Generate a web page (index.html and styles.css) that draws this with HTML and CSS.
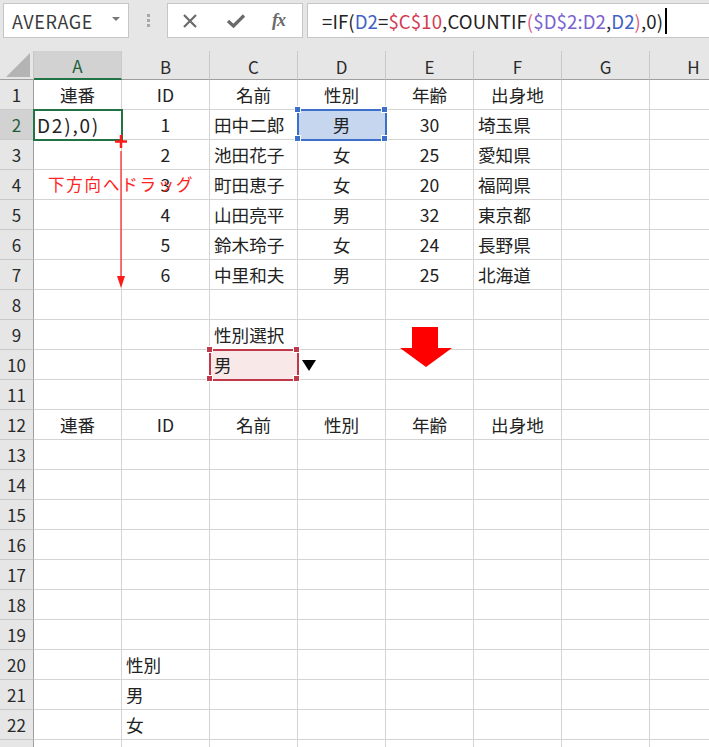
FILE: index.html
```html
<!DOCTYPE html>
<html lang="ja">
<head>
<meta charset="utf-8">
<title>Excel</title>
<link rel="stylesheet" href="styles.css">
</head>
<body>
<div class="toolbar">
  <div class="namebox"><span class="nb-text">AVERAGE</span><svg class="nb-caret" width="8" height="5" viewBox="0 0 8 5"><polygon points="0,0 8,0 4,4" fill="#777"/></svg></div>
  <div class="dots"><span></span><span></span><span></span></div>
  <div class="fxbox">
    <svg class="ic" width="16" height="16" viewBox="0 0 16 16"><path d="M2 2 L14 14 M14 2 L2 14" stroke="#6a6a6a" stroke-width="2.2" fill="none"/></svg>
    <svg class="ic" width="20" height="16" viewBox="0 0 20 16"><path d="M2 8 L7.5 13 L18 2.5" stroke="#6a6a6a" stroke-width="3.2" fill="none"/></svg>
    <span class="fx">fx</span>
  </div>
  <div class="formula"><span>=IF(</span><span class="r1">D2</span><span>=</span><span class="r2">$C$10</span><span>,COUNTIF</span><span class="pp">(</span><span class="r3">$D$2:D2</span><span>,</span><span class="r1">D2</span><span class="pp">)</span><span>,0)</span><span class="cursor"></span></div>
</div>

<div class="sheet">
  <div class="grid">
    <div class="corner"><svg width="24" height="24" viewBox="0 0 24 24"><polygon points="24,0 24,24 0,24" fill="#b4b4b4"/></svg></div>
    <div class="ch sel">A</div><div class="ch">B</div><div class="ch">C</div><div class="ch">D</div><div class="ch">E</div><div class="ch">F</div><div class="ch">G</div><div class="ch">H</div>

    <div class="rh">1</div><div class="c ctr">連番</div><div class="c ctr">ID</div><div class="c ctr">名前</div><div class="c ctr">性別</div><div class="c ctr">年齢</div><div class="c ctr">出身地</div><div class="c"></div><div class="c"></div>
    <div class="rh sel">2</div><div class="c edit"><span>D2),0)</span></div><div class="c ctr">1</div><div class="c">田中二郎</div><div class="c ctr blue-sel">男<i class="h tl"></i><i class="h tr"></i><i class="h bl"></i><i class="h br"></i></div><div class="c ctr">30</div><div class="c">埼玉県</div><div class="c"></div><div class="c"></div>
    <div class="rh">3</div><div class="c"></div><div class="c ctr">2</div><div class="c">池田花子</div><div class="c ctr">女</div><div class="c ctr">25</div><div class="c">愛知県</div><div class="c"></div><div class="c"></div>
    <div class="rh">4</div><div class="c"></div><div class="c ctr">3</div><div class="c">町田恵子</div><div class="c ctr">女</div><div class="c ctr">20</div><div class="c">福岡県</div><div class="c"></div><div class="c"></div>
    <div class="rh">5</div><div class="c"></div><div class="c ctr">4</div><div class="c">山田亮平</div><div class="c ctr">男</div><div class="c ctr">32</div><div class="c">東京都</div><div class="c"></div><div class="c"></div>
    <div class="rh">6</div><div class="c"></div><div class="c ctr">5</div><div class="c">鈴木玲子</div><div class="c ctr">女</div><div class="c ctr">24</div><div class="c">長野県</div><div class="c"></div><div class="c"></div>
    <div class="rh">7</div><div class="c"></div><div class="c ctr">6</div><div class="c">中里和夫</div><div class="c ctr">男</div><div class="c ctr">25</div><div class="c">北海道</div><div class="c"></div><div class="c"></div>
    <div class="rh">8</div><div class="c"></div><div class="c"></div><div class="c"></div><div class="c"></div><div class="c"></div><div class="c"></div><div class="c"></div><div class="c"></div>
    <div class="rh">9</div><div class="c"></div><div class="c"></div><div class="c">性別選択</div><div class="c"></div><div class="c"></div><div class="c"></div><div class="c"></div><div class="c"></div>
    <div class="rh">10</div><div class="c"></div><div class="c"></div><div class="c red-sel">男<i class="h tl"></i><i class="h tr"></i><i class="h bl"></i><i class="h br"></i></div><div class="c"></div><div class="c"></div><div class="c"></div><div class="c"></div><div class="c"></div>
    <div class="rh">11</div><div class="c"></div><div class="c"></div><div class="c"></div><div class="c"></div><div class="c"></div><div class="c"></div><div class="c"></div><div class="c"></div>
    <div class="rh">12</div><div class="c ctr">連番</div><div class="c ctr">ID</div><div class="c ctr">名前</div><div class="c ctr">性別</div><div class="c ctr">年齢</div><div class="c ctr">出身地</div><div class="c"></div><div class="c"></div>
    <div class="rh">13</div><div class="c"></div><div class="c"></div><div class="c"></div><div class="c"></div><div class="c"></div><div class="c"></div><div class="c"></div><div class="c"></div>
    <div class="rh">14</div><div class="c"></div><div class="c"></div><div class="c"></div><div class="c"></div><div class="c"></div><div class="c"></div><div class="c"></div><div class="c"></div>
    <div class="rh">15</div><div class="c"></div><div class="c"></div><div class="c"></div><div class="c"></div><div class="c"></div><div class="c"></div><div class="c"></div><div class="c"></div>
    <div class="rh">16</div><div class="c"></div><div class="c"></div><div class="c"></div><div class="c"></div><div class="c"></div><div class="c"></div><div class="c"></div><div class="c"></div>
    <div class="rh">17</div><div class="c"></div><div class="c"></div><div class="c"></div><div class="c"></div><div class="c"></div><div class="c"></div><div class="c"></div><div class="c"></div>
    <div class="rh">18</div><div class="c"></div><div class="c"></div><div class="c"></div><div class="c"></div><div class="c"></div><div class="c"></div><div class="c"></div><div class="c"></div>
    <div class="rh">19</div><div class="c"></div><div class="c"></div><div class="c"></div><div class="c"></div><div class="c"></div><div class="c"></div><div class="c"></div><div class="c"></div>
    <div class="rh">20</div><div class="c"></div><div class="c">性別</div><div class="c"></div><div class="c"></div><div class="c"></div><div class="c"></div><div class="c"></div><div class="c"></div>
    <div class="rh">21</div><div class="c"></div><div class="c">男</div><div class="c"></div><div class="c"></div><div class="c"></div><div class="c"></div><div class="c"></div><div class="c"></div>
    <div class="rh">22</div><div class="c"></div><div class="c">女</div><div class="c"></div><div class="c"></div><div class="c"></div><div class="c"></div><div class="c"></div><div class="c"></div>
    <div class="rh">23</div><div class="c"></div><div class="c"></div><div class="c"></div><div class="c"></div><div class="c"></div><div class="c"></div><div class="c"></div><div class="c"></div>
  </div>

  <div class="drag-label">下方向へドラッグ</div>
  <svg class="drag" width="16" height="157" viewBox="0 0 16 157">
    <path d="M8 0 V13 M2 6.5 H14" stroke="#ff1a1a" stroke-width="2.5" fill="none"/>
    <path d="M8 16 V145" stroke="#ff1a1a" stroke-width="1.2" fill="none"/>
    <polygon points="4,141 12,141 8,153" fill="#ff1a1a"/>
  </svg>
  <svg class="dd" width="14" height="11" viewBox="0 0 14 11"><polygon points="0,0 14,0 7,11" fill="#000"/></svg>
  <svg class="big-arrow" width="52" height="40" viewBox="0 0 52 40"><polygon points="12,0 38,0 38,21 52,21 26,40 0,21 12,21" fill="#ff0000"/></svg>
</div>
</body>
</html>
```

FILE: styles.css
```css
* { box-sizing: border-box; }
html, body { margin: 0; padding: 0; }
body {
  width: 709px;
  height: 747px;
  overflow: hidden;
  background: #ffffff;
  font-family: "Noto Sans CJK JP", "Noto Sans", sans-serif;
  color: #222;
}

.toolbar {
  height: 51px;
  background: #e6e6e6;
  display: flex;
  align-items: flex-start;
  padding-top: 3px;
  padding-left: 3px;
}
.namebox {
  width: 126px;
  height: 35px;
  background: #fff;
  border: 1px solid #c6c6c6;
  display: flex;
  align-items: center;
  justify-content: space-between;
  padding: 0 8px 0 8px;
}
.nb-text { font-size: 18px; color: #3a3a3a; letter-spacing: 0.6px; }
.nb-caret { margin-top: -2px; }
.dots {
  width: 38px;
  height: 35px;
  display: flex;
  flex-direction: column;
  align-items: center;
  justify-content: center;
  gap: 2px;
}
.dots span { width: 3px; height: 3px; background: #a8a8a8; }
.fxbox {
  width: 136px;
  height: 35px;
  background: #fff;
  border: 1px solid #c6c6c6;
  display: flex;
  align-items: center;
  padding-left: 14px;
}
.fxbox .ic { margin-right: 28px; }
.fxbox .ic + .ic { margin-right: 26px; }
.fx {
  font-family: "Liberation Serif", "DejaVu Serif", serif;
  font-style: italic;
  font-weight: bold;
  font-size: 18px;
  color: #6a6a6a;
  letter-spacing: -1px;
}
.formula {
  flex: 1;
  height: 35px;
  margin-left: 4px;
  background: #fff;
  border: 1px solid #c6c6c6;
  border-right: none;
  display: flex;
  align-items: center;
  padding-left: 14px;
  font-size: 18.6px;
  letter-spacing: 0.1px;
  color: #222;
  white-space: nowrap;
}
.formula .r1 { color: #3f62c6; }
.formula .r2 { color: #d23c52; }
.formula .r3 { color: #7a62cf; }
.formula .pp { color: #dd5f8a; }
.formula .cursor { width: 1.5px; height: 26px; background: #000; margin-left: 2px; }

.sheet { position: relative; }
.grid {
  display: grid;
  grid-template-columns: 34px repeat(8, 88px);
  grid-template-rows: 29px repeat(23, 30px);
}
.corner {
  background: #e6e6e6;
  border-right: 1px solid #c6c6c6;
  border-bottom: 1px solid #9f9f9f;
  display: flex;
  align-items: flex-end;
  justify-content: flex-end;
  padding: 0 3px 2px 0;
}
.ch {
  background: #e6e6e6;
  border-right: 1px solid #c9c9c9;
  border-bottom: 1px solid #9f9f9f;
  display: flex;
  align-items: center;
  justify-content: center;
  font-size: 17px;
  color: #2a2a2a;
  padding-top: 2px;
}
.ch.sel {
  background: #d2d2d2;
  color: #1d5e3a;
  border-bottom: 2px solid #217346;
}
.rh {
  background: #e6e6e6;
  border-right: 1px solid #9f9f9f;
  border-bottom: 1px solid #c9c9c9;
  display: flex;
  align-items: center;
  justify-content: center;
  font-size: 17px;
  color: #2a2a2a;
}
.rh.sel { background: #d2d2d2; color: #1d5e3a; }
.c {
  position: relative;
  border-right: 1px solid #d4d4d4;
  border-bottom: 1px solid #d4d4d4;
  display: flex;
  align-items: center;
  padding-left: 4px;
  font-size: 17.6px;
  color: #222;
  white-space: nowrap;
}
.c.ctr { justify-content: center; padding-left: 0; }
.c.edit {
  outline: 2px solid #217346;
  outline-offset: -1px;
  z-index: 2;
  padding-left: 3px;
}
.c.edit span { font-size: 19px; letter-spacing: 1.8px; }
.c.blue-sel {
  background: #c6d6ee;
  outline: 2px solid #3b6fc9;
  outline-offset: -1px;
  z-index: 2;
}
.c.red-sel {
  background: #f8e8e8;
  outline: 2px solid #c0394b;
  outline-offset: -1px;
  z-index: 2;
}
.h {
  position: absolute;
  width: 7px;
  height: 7px;
  background: #3b6fc9;
  border: 1px solid #fff;
}
.red-sel .h { background: #c0394b; }
.h.tl { left: -4px; top: -4px; }
.h.tr { right: -3px; top: -4px; }
.h.bl { left: -4px; bottom: -3px; }
.h.br { right: -3px; bottom: -3px; }

.drag-label {
  position: absolute;
  left: 48px;
  top: 121px;
  font-size: 16.5px;
  letter-spacing: 1.8px;
  color: #ff2222;
  z-index: 4;
}
.drag {
  position: absolute;
  left: 113px;
  top: 84px;
  z-index: 5;
}
.dd { position: absolute; left: 302px; top: 309px; z-index: 4; }
.big-arrow { position: absolute; left: 400px; top: 276px; z-index: 4; }
```
